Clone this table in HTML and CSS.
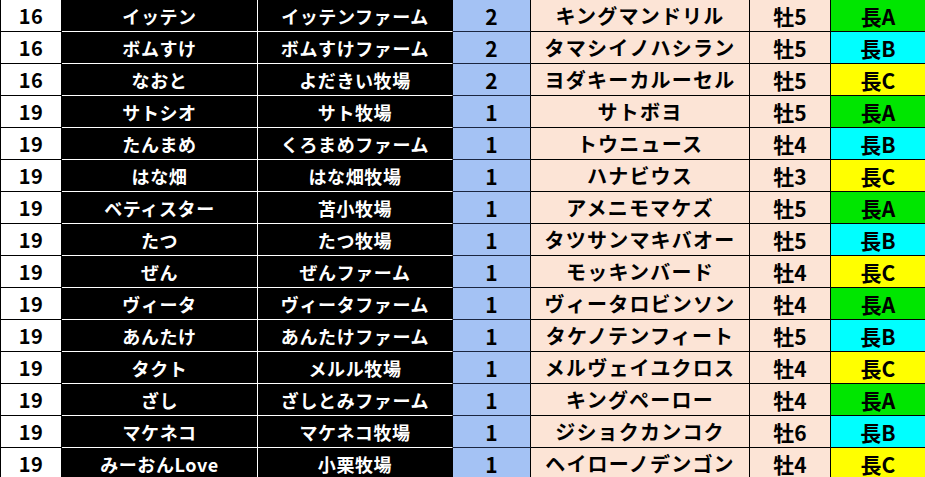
FILE: index.html
```html
<!DOCTYPE html>
<html lang="ja">
<head>
<meta charset="utf-8">
<link rel="stylesheet" href="styles.css">
</head>
<body>
<div class="table">
  <div class="row"><div class="c rank">16</div><div class="c name">イッテン</div><div class="c farm">イッテンファーム</div><div class="c num">2</div><div class="c horse">キングマンドリル</div><div class="c sex">牡5</div><div class="c grade ga">長A</div></div>
  <div class="row"><div class="c rank">16</div><div class="c name">ボムすけ</div><div class="c farm">ボムすけファーム</div><div class="c num">2</div><div class="c horse">タマシイノハシラン</div><div class="c sex">牡5</div><div class="c grade gb">長B</div></div>
  <div class="row"><div class="c rank">16</div><div class="c name">なおと</div><div class="c farm">よだきい牧場</div><div class="c num">2</div><div class="c horse">ヨダキーカルーセル</div><div class="c sex">牡5</div><div class="c grade gc">長C</div></div>
  <div class="row"><div class="c rank">19</div><div class="c name">サトシオ</div><div class="c farm">サト牧場</div><div class="c num">1</div><div class="c horse">サトボヨ</div><div class="c sex">牡5</div><div class="c grade ga">長A</div></div>
  <div class="row"><div class="c rank">19</div><div class="c name">たんまめ</div><div class="c farm">くろまめファーム</div><div class="c num">1</div><div class="c horse">トウニュース</div><div class="c sex">牡4</div><div class="c grade gb">長B</div></div>
  <div class="row"><div class="c rank">19</div><div class="c name">はな畑</div><div class="c farm">はな畑牧場</div><div class="c num">1</div><div class="c horse">ハナビウス</div><div class="c sex">牡3</div><div class="c grade gc">長C</div></div>
  <div class="row"><div class="c rank">19</div><div class="c name">ベティスター</div><div class="c farm">苫小牧場</div><div class="c num">1</div><div class="c horse">アメニモマケズ</div><div class="c sex">牡5</div><div class="c grade ga">長A</div></div>
  <div class="row"><div class="c rank">19</div><div class="c name">たつ</div><div class="c farm">たつ牧場</div><div class="c num">1</div><div class="c horse">タツサンマキバオー</div><div class="c sex">牡5</div><div class="c grade gb">長B</div></div>
  <div class="row"><div class="c rank">19</div><div class="c name">ぜん</div><div class="c farm">ぜんファーム</div><div class="c num">1</div><div class="c horse">モッキンバード</div><div class="c sex">牡4</div><div class="c grade gc">長C</div></div>
  <div class="row"><div class="c rank">19</div><div class="c name">ヴィータ</div><div class="c farm">ヴィータファーム</div><div class="c num">1</div><div class="c horse">ヴィータロビンソン</div><div class="c sex">牡4</div><div class="c grade ga">長A</div></div>
  <div class="row"><div class="c rank">19</div><div class="c name">あんたけ</div><div class="c farm">あんたけファーム</div><div class="c num">1</div><div class="c horse">タケノテンフィート</div><div class="c sex">牡5</div><div class="c grade gb">長B</div></div>
  <div class="row"><div class="c rank">19</div><div class="c name">タクト</div><div class="c farm">メルル牧場</div><div class="c num">1</div><div class="c horse">メルヴェイユクロス</div><div class="c sex">牡4</div><div class="c grade gc">長C</div></div>
  <div class="row"><div class="c rank">19</div><div class="c name">ざし</div><div class="c farm">ざしとみファーム</div><div class="c num">1</div><div class="c horse">キングペーロー</div><div class="c sex">牡4</div><div class="c grade ga">長A</div></div>
  <div class="row"><div class="c rank">19</div><div class="c name">マケネコ</div><div class="c farm">マケネコ牧場</div><div class="c num">1</div><div class="c horse">ジショクカンコク</div><div class="c sex">牡6</div><div class="c grade gb">長B</div></div>
  <div class="row"><div class="c rank">19</div><div class="c name">みーおんLove</div><div class="c farm">小栗牧場</div><div class="c num">1</div><div class="c horse">ヘイローノデンゴン</div><div class="c sex">牡4</div><div class="c grade gc">長C</div></div>
</div>
</body>
</html>
```

FILE: styles.css
```css
html, body {
  margin: 0;
  padding: 0;
  background: #ffffff;
  overflow: hidden;
}

.table {
  width: 925px;
  display: flex;
  flex-direction: column;
  font-family: "Noto Sans CJK JP", "Noto Sans", sans-serif;
  font-weight: 700;
}

.row {
  display: grid;
  grid-template-columns: 62px 196px 195px 78px 219px 81px 1fr;
  height: 32px;
}

.c {
  box-sizing: border-box;
  height: 32px;
  display: flex;
  align-items: center;
  justify-content: center;
  border-right: 1px solid #000;
  border-bottom: 1px solid #000;
  line-height: 1;
  white-space: nowrap;
  color: #000;
  padding-top: 1px;
}

.rank {
  background: #fff;
  border-left: 1px solid #000;
  font-size: 20px;
  letter-spacing: 0.5px;
}

.name {
  background: #000;
  color: #fff;
  border-right-color: #fff;
  border-bottom-color: #fff;
  font-size: 18px;
  letter-spacing: 0.6px;
}

.farm {
  background: #000;
  color: #fff;
  border-bottom-color: #fff;
  font-size: 18px;
  letter-spacing: 0.6px;
}

.num {
  background: #a4c2f4;
  border-bottom-color: #1a2540;
  font-size: 21px;
}

.horse {
  background: #fce4d6;
  font-size: 20px;
  letter-spacing: 1.2px;
}

.sex {
  background: #fce4d6;
  font-size: 21px;
}

.grade {
  border-right: none;
  font-size: 21px;
}

.ga { background: #00e600; }
.gb { background: #00ffff; }
.gc { background: #ffff00; }
```
